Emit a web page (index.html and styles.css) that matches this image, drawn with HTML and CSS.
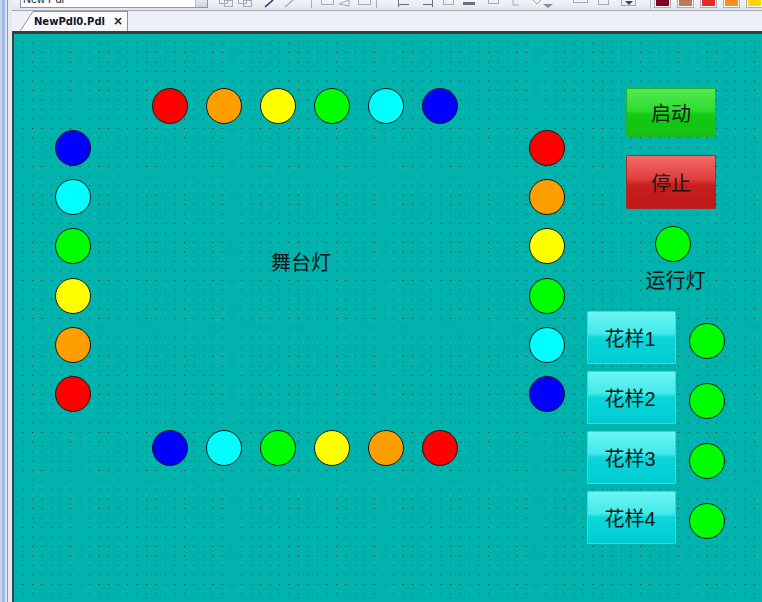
FILE: index.html
```html
<!DOCTYPE html>
<html lang="zh-CN">
<head>
<meta charset="utf-8">
<title>NewPdl0.Pdl</title>
<link rel="stylesheet" href="styles.css">
</head>
<body>
<div class="app">
  <div class="side"></div>
  <div class="main">
    <div class="toolbar">
      <div class="combo"><span class="combo-text">New Pdl</span><span class="combo-btn"></span></div>
      <svg class="tb-icons" width="425" height="10" viewBox="0 0 425 10">
        <g fill="none" stroke="#a4aab8" stroke-width="1">
          <rect x="6.5" y="-2.5" width="8" height="6"/>
          <rect x="11.5" y="0.5" width="8" height="6"/>
          <rect x="25.5" y="-2.5" width="8" height="6"/>
          <rect x="30.5" y="0.5" width="8" height="6"/>
          <line x1="98.5" y1="0" x2="98.5" y2="8"/>
          <rect x="108.5" y="-1.5" width="12" height="6"/>
          <path d="M126 4 L136 0 L136 6 Z"/>
          <rect x="145.5" y="-1.5" width="12" height="6"/>
          <line x1="163.5" y1="0" x2="163.5" y2="8"/>
          <rect x="230.5" y="-1.5" width="10" height="6"/>
          <rect x="275.5" y="-1.5" width="10" height="5"/>
          <path d="M300 0 L300 5 L306 5"/>
          <path d="M320 0 L324 4 L328 0"/>
          <rect x="360.5" y="-2.5" width="14" height="5"/>
          <rect x="385.5" y="-1.5" width="10" height="6"/>
          <rect x="408.5" y="-1.5" width="14" height="7"/>
        </g>
        <line x1="52" y1="7" x2="60" y2="0" stroke="#2c3060" stroke-width="1.6"/>
        <line x1="72" y1="7" x2="80" y2="0" stroke="#a8b0c8" stroke-width="1.6"/>
        <g stroke="#6a7080" stroke-width="1">
          <line x1="185.5" y1="0" x2="185.5" y2="7"/>
          <line x1="186" y1="4.5" x2="196" y2="4.5"/>
          <line x1="210" y1="4.5" x2="219" y2="4.5"/>
          <line x1="219.5" y1="0" x2="219.5" y2="7"/>
        </g>
        <rect x="250" y="2" width="12" height="3" fill="#6a7080"/>
        <path d="M330 4 L340 4 L335 8 Z" fill="#8a90a0"/>
        <path d="M412 1 L420 1 L416 5 Z" fill="#404654"/>
      </svg>
      <div class="swatches">
        <span class="swatch sw1"></span>
        <span class="swatch sw2"></span>
        <span class="swatch sw3"></span>
        <span class="swatch sw4"></span>
        <span class="swatch sw5"></span>
      </div>
    </div>
    <div class="tabbar">
      <div class="tab">
        <svg class="tab-slant" width="13" height="20" viewBox="0 0 13 20">
          <polygon points="0,20 13,0 13,20" fill="#fbfbfd"/>
          <line x1="0" y1="20" x2="13" y2="0.5" stroke="#8a92a4" stroke-width="1"/>
        </svg>
        <div class="tab-body">NewPdl0.Pdl<span class="tab-close">×</span></div>
      </div>
    </div>
    <div class="canvas">
      <svg class="grid" width="100%" height="100%">
        <defs>
          <pattern id="dots" x="0" y="0" width="9.5" height="9.5" patternUnits="userSpaceOnUse">
            <rect x="9" y="9" width="1" height="1" fill="#143836" shape-rendering="crispEdges"/>
          </pattern>
        </defs>
        <rect width="100%" height="100%" fill="url(#dots)"/>
      </svg>

      <div class="lamp-row row-top">
        <span class="lamp red"></span>
        <span class="lamp orange"></span>
        <span class="lamp yellow"></span>
        <span class="lamp green"></span>
        <span class="lamp cyan"></span>
        <span class="lamp blue"></span>
      </div>

      <div class="lamp-col col-left">
        <span class="lamp blue"></span>
        <span class="lamp cyan"></span>
        <span class="lamp green"></span>
        <span class="lamp yellow"></span>
        <span class="lamp orange"></span>
        <span class="lamp red"></span>
      </div>

      <div class="lamp-col col-right">
        <span class="lamp red"></span>
        <span class="lamp orange"></span>
        <span class="lamp yellow"></span>
        <span class="lamp green"></span>
        <span class="lamp cyan"></span>
        <span class="lamp blue"></span>
      </div>

      <div class="lamp-row row-bottom">
        <span class="lamp blue"></span>
        <span class="lamp cyan"></span>
        <span class="lamp green"></span>
        <span class="lamp yellow"></span>
        <span class="lamp orange"></span>
        <span class="lamp red"></span>
      </div>

      <div class="stage-label">舞台灯</div>

      <div class="control">
        <div class="btn btn-start">启动</div>
        <div class="btn btn-stop">停止</div>
        <span class="lamp green run-lamp"></span>
        <div class="run-label">运行灯</div>
      </div>

      <div class="patterns">
        <div class="pattern-row">
          <div class="btn btn-pattern">花样1</div>
          <span class="lamp green"></span>
        </div>
        <div class="pattern-row">
          <div class="btn btn-pattern">花样2</div>
          <span class="lamp green"></span>
        </div>
        <div class="pattern-row">
          <div class="btn btn-pattern">花样3</div>
          <span class="lamp green"></span>
        </div>
        <div class="pattern-row">
          <div class="btn btn-pattern">花样4</div>
          <span class="lamp green"></span>
        </div>
      </div>
    </div>
  </div>
</div>
</body>
</html>
```

FILE: styles.css
```css
* { box-sizing: border-box; }

html, body {
  margin: 0;
  padding: 0;
  width: 762px;
  height: 602px;
  overflow: hidden;
  font-family: "Liberation Sans", "Noto Sans CJK SC", sans-serif;
  color: #111;
}

.app {
  display: flex;
  width: 762px;
  height: 602px;
}

.side {
  width: 12px;
  flex: none;
  background: linear-gradient(to right,
    #c6d4ee 0, #c6d4ee 2px,
    #a4bae2 2px, #a4bae2 5px,
    #d8e2f4 5px, #d8e2f4 7px,
    #8aa0cc 7px, #8aa0cc 8px,
    #e6e9f0 8px, #e6e9f0 12px);
}

.main {
  flex: 1;
  min-width: 0;
  display: flex;
  flex-direction: column;
}

/* toolbar */
.toolbar {
  height: 11px;
  flex: none;
  display: flex;
  align-items: flex-start;
  background: linear-gradient(#f2f3f7, #e2e5ec);
  border-bottom: 1px solid #a6aab6;
  overflow: hidden;
}

.combo {
  margin-left: 8px;
  width: 195px;
  height: 8px;
  display: flex;
  background: #fff;
  border: 1px solid #8e96a8;
  border-top: none;
  overflow: hidden;
}

.combo-text {
  flex: 1;
  font-size: 11px;
  line-height: 11px;
  margin-top: -6px;
  padding-left: 2px;
  color: #222;
}

.combo-btn {
  width: 12px;
  background: linear-gradient(#e6e8ee, #cfd3dc);
  border-left: 1px solid #b8bcc8;
}

.tb-icons {
  margin-left: 5px;
  flex: none;
}

.swatches {
  display: flex;
  gap: 8px;
  margin-left: 12px;
  padding-left: 4px;
  border-left: 1px solid #b8bcc8;
  height: 9px;
}

.swatch {
  width: 15px;
  height: 7px;
  border: 1px solid #fff;
  border-top: none;
  box-shadow: 0 0 0 1px #a8acb8;
}
.sw1 { background: #800020; }
.sw2 { background: #c07858; }
.sw3 { background: #e82828; }
.sw4 { background: #ff8a22; }
.sw5 { background: #ffd400; }

/* tabs */
.tabbar {
  height: 20px;
  flex: none;
  display: flex;
  align-items: flex-end;
  background: #eef0f8;
  padding-left: 8px;
}

.tab {
  display: flex;
  align-items: flex-end;
  height: 20px;
}

.tab-slant {
  display: block;
  flex: none;
}

.tab-body {
  height: 20px;
  display: flex;
  align-items: center;
  padding: 0 4px 1px 1px;
  background: linear-gradient(#fdfdfe, #f4f5fa);
  border-top: 1px solid #8a92a4;
  border-right: 1px solid #8a92a4;
  font-family: "DejaVu Sans", "Liberation Sans", sans-serif;
  font-weight: bold;
  font-size: 10px;
  color: #101828;
}

.tab-close {
  margin-left: 8px;
  font-size: 12px;
  font-weight: bold;
}

/* canvas */
.canvas {
  flex: 1;
  position: relative;
  overflow: hidden;
  background: #00b3ad;
  border-top: 3px solid #363c44;
  border-left: 2px solid #3a4048;
}

.grid {
  position: absolute;
  inset: 0;
  display: block;
}

.lamp {
  display: block;
  width: 36px;
  height: 36px;
  flex: none;
  border-radius: 50%;
  border: 1px solid #141414;
}
.red    { background: #ff0000; }
.orange { background: #ff9e00; }
.yellow { background: #ffff00; }
.green  { background: #00ff00; }
.cyan   { background: #00ffff; }
.blue   { background: #0000ff; }

.lamp-row {
  position: absolute;
  left: 138px;
  display: flex;
  gap: 18px;
}
.row-top { top: 54px; }
.row-bottom { top: 396px; }

.lamp-col {
  position: absolute;
  top: 96px;
  display: flex;
  flex-direction: column;
  gap: 13.2px;
}
.col-left { left: 41px; }
.col-right { left: 515px; }

.stage-label {
  position: absolute;
  left: 257px;
  top: 218px;
  font-family: "Noto Sans CJK SC", sans-serif;
  font-size: 20px;
  line-height: 20px;
  color: #111;
}

.btn {
  display: flex;
  align-items: center;
  justify-content: center;
  font-size: 20px;
  color: #101818;
}

.control {
  position: absolute;
  left: 612px;
  top: 54px;
  width: 90px;
  display: flex;
  flex-direction: column;
  align-items: center;
}

.btn-start {
  width: 90px;
  height: 49px;
  background: linear-gradient(#52e852 0%, #30dc30 46%, #16ca16 54%, #12c212 100%);
  border: 1px solid #28b028;
  border-radius: 1px;
}

.btn-stop {
  margin-top: 18px;
  width: 90px;
  height: 54px;
  background: linear-gradient(#f46a6a 0%, #e03e3e 44%, #c81e1e 56%, #be1818 100%);
  border: 1px solid #a82a2a;
  border-radius: 1px;
}

.run-lamp {
  margin-top: 17px;
  margin-left: 4px;
}

.run-label {
  margin-top: 8px;
  margin-left: 9px;
  font-family: "Noto Sans CJK SC", sans-serif;
  font-size: 20px;
  line-height: 20px;
  color: #111;
}

.patterns {
  position: absolute;
  left: 573px;
  top: 277px;
  display: flex;
  flex-direction: column;
  gap: 7px;
}

.pattern-row {
  display: flex;
  align-items: flex-start;
}

.pattern-row .lamp {
  margin-left: 13px;
  margin-top: 12px;
}

.btn-pattern {
  width: 89px;
  height: 53px;
  padding-right: 3px;
  background: linear-gradient(#6cf4f4 0%, #44eaea 42%, #0cd6da 50%, #00ccd2 100%);
  border: 1px solid #3ed6d8;
  border-radius: 1px;
}
```
